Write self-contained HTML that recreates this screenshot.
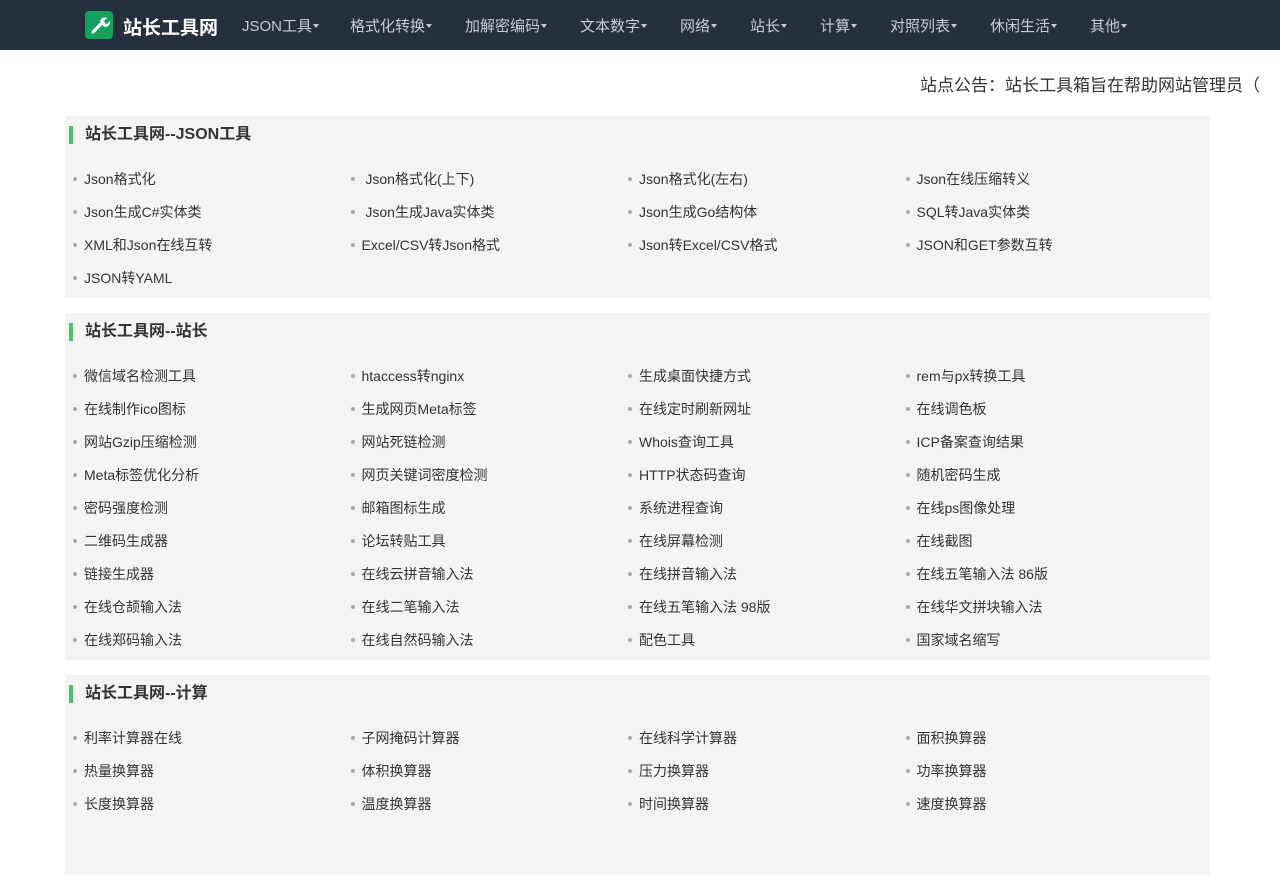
<!DOCTYPE html>
<html><head><meta charset="utf-8"><style>
*{margin:0;padding:0;box-sizing:border-box}
body{width:1280px;height:800px;overflow:hidden;background:#fff;font-family:"Liberation Sans","Noto Sans CJK SC",sans-serif;color:#333}
.nav{height:50px;background:#252f3e;position:relative}
.logo{position:absolute;left:85px;top:11px;width:28px;height:28px;background:#13a15c;border-radius:4px}
.brand{position:absolute;left:123px;top:13px;font-size:19px;font-weight:bold;color:#fff}
.ni{position:absolute;top:15px;font-size:15px;color:#c8ccd2;white-space:nowrap}
.ni:after{content:"";display:inline-block;border-top:4px solid #c8ccd2;border-left:3.5px solid transparent;border-right:3.5px solid transparent;vertical-align:3px;margin-left:1px}
.ann{position:absolute;left:920px;top:71px;font-size:17px;color:#333;white-space:nowrap}
.sec{position:absolute;left:65px;width:1145px;background:#f4f4f4}
.hd{position:absolute;left:4px;top:10px;height:18px;border-left:4px solid #4fc06a;padding-left:12px;font-size:16px;font-weight:bold;line-height:18px;color:#333;white-space:nowrap}
.items{position:absolute;left:8px;top:47px;width:1120px}
.it{float:left;width:277.5px;height:33px;line-height:33px;font-size:14px;color:#333;white-space:pre}
.it:before{content:"";display:inline-block;width:4px;height:4px;border-radius:50%;background:#aaa;vertical-align:3px;margin-right:7px}
</style></head><body>
<div class="nav">
<div class="logo"><svg width="28" height="28" viewBox="0 0 28 28"><path d="M8 21 L16 13" stroke="#fff" stroke-width="3.2" stroke-linecap="round"/><path d="M15 10 a5 5 0 0 1 7-3 l-3 3 1 2 2 1 3-3 a5 5 0 0 1 -6 6z" fill="#fff"/></svg></div>
<div class="brand">站长工具网</div>
<span class="ni" style="left:242px">JSON工具</span>
<span class="ni" style="left:350px">格式化转换</span>
<span class="ni" style="left:465px">加解密编码</span>
<span class="ni" style="left:580px">文本数字</span>
<span class="ni" style="left:680px">网络</span>
<span class="ni" style="left:750px">站长</span>
<span class="ni" style="left:820px">计算</span>
<span class="ni" style="left:890px">对照列表</span>
<span class="ni" style="left:990px">休闲生活</span>
<span class="ni" style="left:1090px">其他</span>
</div>
<div class="ann">站点公告：站长工具箱旨在帮助网站管理员（</div>

<div class="sec" style="top:116px;height:182px">
<div class="hd">站长工具网--JSON工具</div>
<div class="items">
<div class="it">Json格式化</div><div class="it"> Json格式化(上下)</div><div class="it">Json格式化(左右)</div><div class="it">Json在线压缩转义</div>
<div class="it">Json生成C#实体类</div><div class="it"> Json生成Java实体类</div><div class="it">Json生成Go结构体</div><div class="it">SQL转Java实体类</div>
<div class="it">XML和Json在线互转</div><div class="it">Excel/CSV转Json格式</div><div class="it">Json转Excel/CSV格式</div><div class="it">JSON和GET参数互转</div>
<div class="it">JSON转YAML</div>
</div></div>

<div class="sec" style="top:313px;height:347px">
<div class="hd">站长工具网--站长</div>
<div class="items">
<div class="it">微信域名检测工具</div><div class="it">htaccess转nginx</div><div class="it">生成桌面快捷方式</div><div class="it">rem与px转换工具</div>
<div class="it">在线制作ico图标</div><div class="it">生成网页Meta标签</div><div class="it">在线定时刷新网址</div><div class="it">在线调色板</div>
<div class="it">网站Gzip压缩检测</div><div class="it">网站死链检测</div><div class="it">Whois查询工具</div><div class="it">ICP备案查询结果</div>
<div class="it">Meta标签优化分析</div><div class="it">网页关键词密度检测</div><div class="it">HTTP状态码查询</div><div class="it">随机密码生成</div>
<div class="it">密码强度检测</div><div class="it">邮箱图标生成</div><div class="it">系统进程查询</div><div class="it">在线ps图像处理</div>
<div class="it">二维码生成器</div><div class="it">论坛转贴工具</div><div class="it">在线屏幕检测</div><div class="it">在线截图</div>
<div class="it">链接生成器</div><div class="it">在线云拼音输入法</div><div class="it">在线拼音输入法</div><div class="it">在线五笔输入法 86版</div>
<div class="it">在线仓颉输入法</div><div class="it">在线二笔输入法</div><div class="it">在线五笔输入法 98版</div><div class="it">在线华文拼块输入法</div>
<div class="it">在线郑码输入法</div><div class="it">在线自然码输入法</div><div class="it">配色工具</div><div class="it">国家域名缩写</div>
</div></div>

<div class="sec" style="top:675px;height:200px">
<div class="hd">站长工具网--计算</div>
<div class="items">
<div class="it">利率计算器在线</div><div class="it">子网掩码计算器</div><div class="it">在线科学计算器</div><div class="it">面积换算器</div>
<div class="it">热量换算器</div><div class="it">体积换算器</div><div class="it">压力换算器</div><div class="it">功率换算器</div>
<div class="it">长度换算器</div><div class="it">温度换算器</div><div class="it">时间换算器</div><div class="it">速度换算器</div>
</div></div>
</body></html>
